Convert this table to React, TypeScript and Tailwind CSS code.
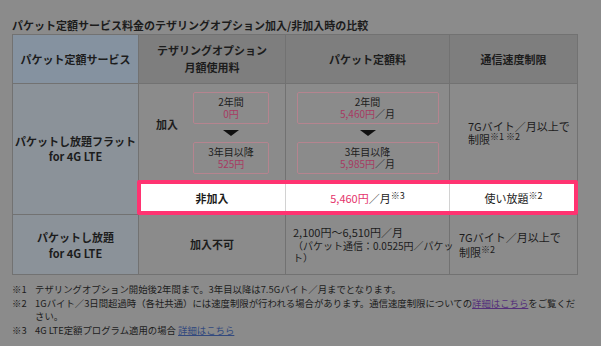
import React from "react";

const B = "border-r border-b border-[#727272]";

function PriceBox({ top, bottom, wide }: { top: string; bottom: React.ReactNode; wide?: boolean }) {
  return (
    <div
      className={`${wide ? "w-[142px]" : "w-[76px]"} h-[32px] border border-[#b5848f] rounded-[2px] flex flex-col items-center justify-center text-[10px] leading-[12px]`}
    >
      <div>{top}</div>
      <div>{bottom}</div>
    </div>
  );
}

function Arrow() {
  return (
    <svg width="16" height="6" viewBox="0 0 16 6" className="my-[6px]">
      <polygon points="0,0 16,0 8,6" fill="#111" />
    </svg>
  );
}

function Note({ children }: { children: React.ReactNode }) {
  return <span className="relative -top-[4px] text-[9px] leading-[9px]">{children}</span>;
}

export default function App() {
  return (
    <div
      className="w-[601px] h-[346px] bg-[#8b8b8b] overflow-hidden text-[#1c1c1c]"
      style={{ fontFamily: '"Noto Sans CJK JP", "Noto Sans", sans-serif' }}
    >
      <div className="pl-3 pt-[18px] text-[11px] font-bold leading-[14px]">
        パケット定額サービス料金のテザリングオプション加入/非加入時の比較
      </div>

      <div className="ml-3 mt-[2px] grid w-[566px] grid-cols-[126px_147px_164px_128px] border-l border-t border-[#727272] text-[11px]">
        {/* header */}
        <div className={`${B} h-[49px] bg-[#8592a0] flex items-center justify-center font-bold`}>
          パケット定額サービス
        </div>
        <div className={`${B} h-[49px] bg-[#7e7e7e] flex items-center justify-center text-center font-bold leading-[17px]`}>
          テザリングオプション
          <br />
          月額使用料
        </div>
        <div className={`${B} h-[49px] bg-[#7e7e7e] flex items-center justify-center font-bold`}>
          パケット定額料
        </div>
        <div className={`${B} h-[49px] bg-[#7e7e7e] flex items-center justify-center font-bold`}>
          通信速度制限
        </div>

        {/* row 1 */}
        <div className={`${B} row-span-2 bg-[#8b9299] flex items-center justify-center text-center font-bold leading-[15px]`}>
          パケットし放題フラット
          <br />
          for 4G LTE
        </div>
        <div className={`${B} h-[98px] flex pl-[17px] pt-[8px]`}>
          <div className="w-[37px] mt-[25px] font-bold leading-[14px]">加入</div>
          <div className="flex flex-col items-center">
            <PriceBox top="2年間" bottom={<span className="text-[#a83a62]">0円</span>} />
            <Arrow />
            <PriceBox top="3年目以降" bottom={<span className="text-[#a83a62]">525円</span>} />
          </div>
        </div>
        <div className={`${B} h-[98px] flex flex-col items-center pt-[8px]`}>
          <PriceBox
            wide
            top="2年間"
            bottom={
              <>
                <span className="text-[#a83a62]">5,460円</span>／月
              </>
            }
          />
          <Arrow />
          <PriceBox
            wide
            top="3年目以降"
            bottom={
              <>
                <span className="text-[#a83a62]">5,985円</span>／月
              </>
            }
          />
        </div>
        <div className={`${B} h-[98px] flex items-center pl-[18px]`}>
          <div className="leading-[13px]">
            <div>7Gバイト／月以上で</div>
            <div>
              制限<Note>※1 ※2</Note>
            </div>
          </div>
        </div>

        {/* row 1b (highlighted) */}
        <div className={`${B} col-span-3 h-[33px] relative bg-white`}>
          <div className="grid h-full grid-cols-[147px_164px_1fr]">
            <div className="flex items-center justify-center border-r border-[#d2d2d2] font-bold">非加入</div>
            <div className="flex items-center justify-center border-r border-[#d2d2d2] text-[#222]">
              <span>
                <span className="text-[#e5336c]">5,460円</span>／月<Note>※3</Note>
              </span>
            </div>
            <div className="flex items-center justify-center text-[#222]">
              <span>
                使い放題<Note>※2</Note>
              </span>
            </div>
          </div>
          <div className="absolute left-[-2px] right-[-1px] top-[-2px] bottom-[-1px] border-4 border-[#ff3371] rounded-[2px]" />
        </div>

        {/* row 2 */}
        <div className={`${B} h-[60px] bg-[#8b9299] flex items-center justify-center text-center font-bold leading-[16px]`}>
          パケットし放題
          <br />
          for 4G LTE
        </div>
        <div className={`${B} h-[60px] flex items-center justify-center font-bold`}>加入不可</div>
        <div className={`${B} h-[60px] flex flex-col justify-center pl-[7px]`}>
          <div className="leading-[15px] whitespace-nowrap">2,100円～6,510円／月</div>
          <div className="text-[10px] leading-[12px] whitespace-nowrap">
            （パケット通信：0.0525円／パケッ
            <br />
            ト）
          </div>
        </div>
        <div className={`${B} h-[60px] flex items-center pl-[9px]`}>
          <div className="leading-[15px]">
            <div>7Gバイト／月以上で</div>
            <div>
              制限<Note>※2</Note>
            </div>
          </div>
        </div>
      </div>

      <div className="ml-3 mt-[8px] text-[9.4px] leading-[13.5px] whitespace-nowrap">
        <div className="flex">
          <div className="w-[23px]">※1</div>
          <div>テザリングオプション開始後2年間まで。3年目以降は7.5Gバイト／月までとなります。</div>
        </div>
        <div className="flex">
          <div className="w-[23px]">※2</div>
          <div>
            1Gバイト／3日間超過時（各社共通）には速度制限が行われる場合があります。通信速度制限についての
            <span className="text-[#55307a] underline">詳細はこちら</span>をご覧くだ
            <br />
            さい。
          </div>
        </div>
        <div className="flex">
          <div className="w-[23px]">※3</div>
          <div>
            4G LTE定額プログラム適用の場合 <span className="text-[#32497e] underline">詳細はこちら</span>
          </div>
        </div>
      </div>
    </div>
  );
}
